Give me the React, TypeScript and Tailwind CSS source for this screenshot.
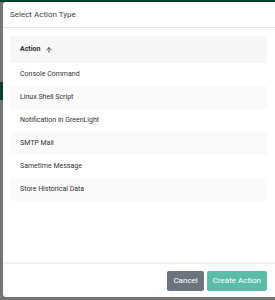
import { ArrowUp } from 'lucide-react'

const ACTIONS = [
  'Console Command',
  'Linux Shell Script',
  'Notification in GreenLight',
  'SMTP Mail',
  'Sametime Message',
  'Store Historical Data',
]

export default function App() {
  return (
    <div
      className="relative w-[275px] h-[300px] overflow-hidden bg-[#757575]"
      style={{ fontFamily: 'Roboto, "Liberation Sans", sans-serif' }}
    >
      {/* page behind the overlay */}
      <div className="h-[2px] bg-[#0b3f33]" />
      <div className="absolute left-0 top-[82px] w-[3px] h-[18px] bg-[#0b3f33]" />

      {/* dialog */}
      <div className="absolute left-[3px] top-[2px] w-[276px] h-[295px] bg-white rounded-[3px] flex flex-col">
        <div className="h-[26px] flex items-center pl-[7px] border-b border-[#e6e6e6] text-[8px] text-[#3f3f3f]">
          Select Action Type
        </div>

        <div className="flex-1 pt-[8px] pl-[7px] pr-[8px]">
          <div className="w-[257px]">
            <div className="h-[27px] flex items-center gap-[5px] pl-[10px] bg-[#f7f7f7] text-[7px] font-bold text-[#2f2f2f]">
              Action
              <ArrowUp size={8} strokeWidth={2.5} className="text-[#333]" />
            </div>
            {ACTIONS.map((a, i) => (
              <div
                key={a}
                className={`h-[23px] flex items-center pl-[10px] text-[7px] text-[#333] ${
                  i % 2 === 1 ? 'bg-[#fafafa]' : 'bg-white'
                }`}
              >
                {a}
              </div>
            ))}
          </div>
        </div>

        <div className="h-[35px] border-t-2 border-[#f2f2f2] flex items-start justify-end gap-[3px] pt-[7px] pr-[12px]">
          <button className="h-[20px] px-[6px] rounded-[2px] bg-[#6c757d] text-white text-[8px]">
            Cancel
          </button>
          <button className="h-[20px] px-[6px] rounded-[2px] bg-[#5bbda8] text-white text-[8px]">
            Create Action
          </button>
        </div>
      </div>
    </div>
  )
}
